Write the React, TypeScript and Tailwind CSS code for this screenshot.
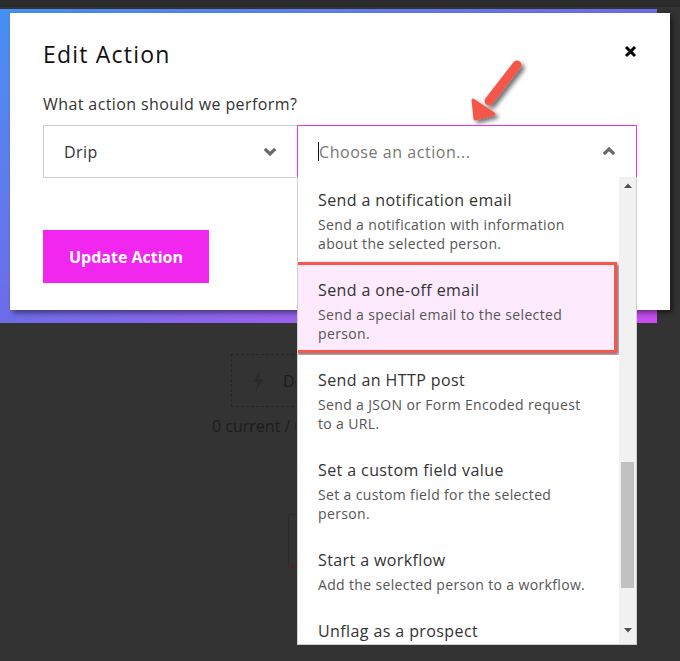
const FONT = "font-['Open_Sans','Liberation_Sans',sans-serif]";

interface ActionOption {
  title: string;
  desc?: string;
  active?: boolean;
}

const OPTIONS: ActionOption[] = [
  {
    title: "Send a notification email",
    desc: "Send a notification with information about the selected person.",
  },
  {
    title: "Send a one-off email",
    desc: "Send a special email to the selected person.",
    active: true,
  },
  {
    title: "Send an HTTP post",
    desc: "Send a JSON or Form Encoded request to a URL.",
  },
  {
    title: "Set a custom field value",
    desc: "Set a custom field for the selected person.",
  },
  {
    title: "Start a workflow",
    desc: "Add the selected person to a workflow.",
  },
  { title: "Unflag as a prospect" },
];

function Chevron({ up }: { up?: boolean }) {
  return (
    <svg width="14" height="9" viewBox="0 0 14 9" className="shrink-0">
      <polyline
        points={up ? "1.8,7.2 7,2 12.2,7.2" : "1.8,1.8 7,7 12.2,1.8"}
        fill="none"
        stroke="#6b6b6b"
        strokeWidth="3.2"
      />
    </svg>
  );
}

function OptionRow({ option }: { option: ActionOption }) {
  return (
    <div
      className={`relative px-5 pt-[13px] pb-[12px] ${
        option.active ? "bg-[#fdeafd]" : "bg-white"
      }`}
    >
      <div className="text-[16px] leading-[24px] tracking-[0.4px] text-[#333]">
        {option.title}
      </div>
      {option.desc && (
        <div className="mt-[3px] pr-2 text-[14px] leading-[19px] tracking-[0.35px] text-[#555]">
          {option.desc}
        </div>
      )}
      {option.active && (
        <div className="pointer-events-none absolute -left-[3px] -top-[3px] h-[91px] w-[322px] border-[3px] border-[#f5574a] shadow-[2px_2px_4px_rgba(0,0,0,0.55)]" />
      )}
    </div>
  );
}

function ActionMenu() {
  return (
    <div className="absolute -left-px -right-px top-full flex h-[468px] border border-t-0 border-[#cfcfcf] bg-white">
      <div className="flex-1 overflow-hidden">
        <div className="-mt-[2px]">
          {OPTIONS.map((o) => (
            <OptionRow key={o.title} option={o} />
          ))}
        </div>
      </div>
      <div className="flex w-[17px] flex-col items-center bg-[#f1f1f1]">
        <svg width="8" height="5" viewBox="0 0 8 5" className="mt-[6px]">
          <polygon points="0,5 4,0.5 8,5" fill="#505050" />
        </svg>
        <div className="mt-[274px] h-[126px] w-[13px] bg-[#c1c1c1]" />
        <svg width="8" height="5" viewBox="0 0 8 5" className="mt-[40px]">
          <polygon points="0,0 8,0 4,4.5" fill="#505050" />
        </svg>
      </div>
    </div>
  );
}

function DimmedPage() {
  return (
    <div className="flex flex-col">
      <div className="h-[7px] bg-[#2b2b2b]" />
      <div className="flex w-[296px] flex-col overflow-hidden">
        <div className="ml-[231px] mt-[347px] flex h-[53px] w-[218px] shrink-0 items-center border border-dashed border-[#262626] pl-[21px]">
          <svg width="10" height="20" viewBox="0 0 10 20" className="shrink-0">
            <polygon points="7,0 0,11 4.5,11 3,20 10,8 5.5,8" fill="#2a2a2a" />
          </svg>
          <span className="ml-[20px] whitespace-nowrap text-[16px] text-[#1c1c1c]">Default</span>
        </div>
        <div className="ml-[212px] mt-[8px] whitespace-nowrap text-[16px] leading-[22px] text-[#1c1c1c]">
          0 current / 0 completed
        </div>
        <div className="ml-[288px] mt-[77px] h-[54px] w-[90px] shrink-0 rounded-[3px] border border-[#2a2a2a] border-b-[3px] border-b-[#4a2626]" />
      </div>
    </div>
  );
}

function Arrow() {
  return (
    <svg
      width="80"
      height="80"
      viewBox="0 0 80 80"
      className="pointer-events-none absolute left-[460px] top-[52px]"
    >
      <defs>
        <filter id="ash" x="-30%" y="-30%" width="160%" height="160%">
          <feDropShadow dx="3" dy="3" stdDeviation="2" floodColor="#000" floodOpacity="0.55" />
        </filter>
      </defs>
      <g filter="url(#ash)">
        <line x1="57" y1="13" x2="29" y2="49" stroke="#f4574a" strokeWidth="9" strokeLinecap="round" />
        <polygon points="15,67 13,48 34,62" fill="#f4574a" stroke="#f4574a" strokeWidth="3" strokeLinejoin="round" />
      </g>
    </svg>
  );
}

export default function App() {
  return (
    <div className={`relative h-[661px] w-[680px] overflow-hidden bg-[#333333] ${FONT}`}>
      <DimmedPage />

      <div className="absolute left-0 top-[9px] h-[314px] w-[657px] bg-gradient-to-br from-[#4590f2] via-[#6d6be8] to-[#c94cf2]" />

      <div className="absolute left-[10px] top-[13px] h-[297px] w-[660px] bg-white pl-[33px] pr-[33px] pt-[27px] shadow-[3px_3px_5px_rgba(0,0,0,0.45)]">
        <div className="text-[23px] font-medium leading-[28px] tracking-[1.2px] text-[#111]">
          Edit Action
        </div>
        <button className="absolute right-[33px] top-[32px]" aria-label="Close">
          <svg width="13" height="13" viewBox="0 0 13 13">
            <path d="M2 2 L11 11 M11 2 L2 11" stroke="#000" strokeWidth="3" />
          </svg>
        </button>

        <div className="mt-[26px] text-[16px] leading-[20px] tracking-[0.4px] text-[#333]">
          What action should we perform?
        </div>

        <div className="mt-[11px] flex h-[53px]">
          <div className="flex w-[254px] items-center justify-between border border-r-0 border-[#cccccc] pl-5 pr-5">
            <span className="text-[16px] tracking-[0.4px] text-[#333]">Drip</span>
            <Chevron />
          </div>
          <div className="relative flex flex-1 items-center justify-between border border-[#f030f0] pl-5 pr-5">
            <div className="flex items-center">
              <span className="h-[19px] w-px bg-[#111]" />
              <span className="text-[16px] tracking-[0.55px] text-[#777]">Choose an action...</span>
            </div>
            <Chevron up />
            <ActionMenu />
          </div>
        </div>

        <button className="mt-[52px] flex h-[53px] w-[166px] items-center justify-center bg-[#f227ef] text-[16px] font-bold text-white">
          Update Action
        </button>
      </div>

      <Arrow />
    </div>
  );
}
